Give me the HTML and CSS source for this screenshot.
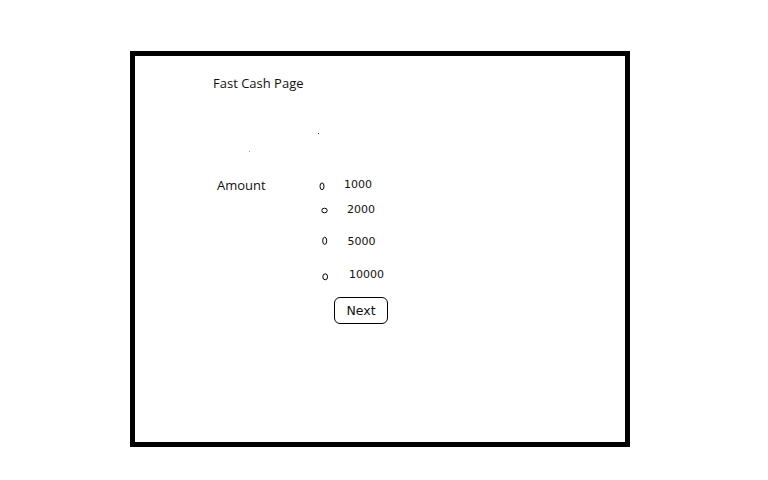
FILE: index.html
```html
<!DOCTYPE html>
<html>
<head>
<meta charset="utf-8">
<title>Fast Cash Page</title>
<link rel="stylesheet" href="styles.css">
</head>
<body>
<div class="frame">
  <span class="speck speck-a"></span>
  <span class="speck speck-b"></span>
  <h1 class="title">Fast Cash Page</h1>
  <div class="amount-section">
    <div class="amount-label">Amount</div>
    <div class="options">
      <div class="option opt-1">
        <svg class="radio" width="10" height="20" viewBox="0 0 10 20"><ellipse cx="4" cy="11.3" rx="2" ry="3.4" fill="none" stroke="#000" stroke-width="1"/></svg>
        <span class="value">1000</span>
      </div>
      <div class="option opt-2">
        <svg class="radio" width="10" height="20" viewBox="0 0 10 20"><ellipse cx="6.5" cy="10.5" rx="2.7" ry="2.3" fill="none" stroke="#000" stroke-width="1"/></svg>
        <span class="value">2000</span>
      </div>
      <div class="option opt-3">
        <svg class="radio" width="10" height="20" viewBox="0 0 10 20"><ellipse cx="6.7" cy="8.8" rx="2" ry="3.6" fill="none" stroke="#000" stroke-width="1"/></svg>
        <span class="value">5000</span>
      </div>
      <div class="option opt-4">
        <svg class="radio" width="10" height="20" viewBox="0 0 10 20"><ellipse cx="7.2" cy="11.8" rx="2.4" ry="3" fill="none" stroke="#000" stroke-width="1"/></svg>
        <span class="value">10000</span>
      </div>
      <button class="next-btn" type="button">Next</button>
    </div>
  </div>
</div>
</body>
</html>
```
FILE: styles.css
```css
html, body {
  margin: 0;
  padding: 0;
  background: #ffffff;
}

body {
  width: 768px;
  height: 480px;
  overflow: hidden;
  font-family: "Open Sans", "Liberation Sans", sans-serif;
  color: #111;
}

.frame {
  position: relative;
  box-sizing: border-box;
  width: 500px;
  height: 396px;
  margin: 51px 0 0 130px;
  border: 5px solid #000;
  display: flex;
  flex-direction: column;
}

.speck {
  position: absolute;
  width: 1px;
  height: 1px;
  background: #444;
}

.speck-a {
  left: 183px;
  top: 77px;
}

.speck-b {
  left: 114px;
  top: 95px;
  background: #999;
}

.title {
  margin: 18px 0 0 78px;
  font-size: 13px;
  font-weight: normal;
  line-height: 18px;
}

.amount-section {
  display: flex;
  align-items: flex-start;
  margin: 83px 0 0 82px;
}

.amount-label {
  width: 101px;
  font-size: 13px;
  line-height: 20px;
}

.options {
  display: flex;
  flex-direction: column;
  align-items: flex-start;
}

.option {
  display: flex;
  align-items: flex-start;
  height: 20px;
  font-family: "DejaVu Sans", "Verdana", sans-serif;
  font-size: 11px;
  line-height: 20px;
}

.radio {
  display: block;
  flex: none;
}

.opt-1 .value { padding-left: 16px; }
.opt-2 { margin-top: 5px; }
.opt-2 .value { padding-left: 19px; }
.opt-3 { margin-top: 12px; }
.opt-3 .value { padding-left: 19.5px; }
.opt-4 { margin-top: 13px; }
.opt-4 .value { padding-left: 21px; }

.next-btn {
  box-sizing: border-box;
  width: 54px;
  height: 27px;
  margin: 12px 0 0 16px;
  padding: 0;
  border: 1px solid #000;
  border-radius: 6px;
  background: #fff;
  color: #111;
  font-family: "DejaVu Sans", "Verdana", sans-serif;
  font-size: 12.5px;
  line-height: 25px;
  text-align: center;
}
```
